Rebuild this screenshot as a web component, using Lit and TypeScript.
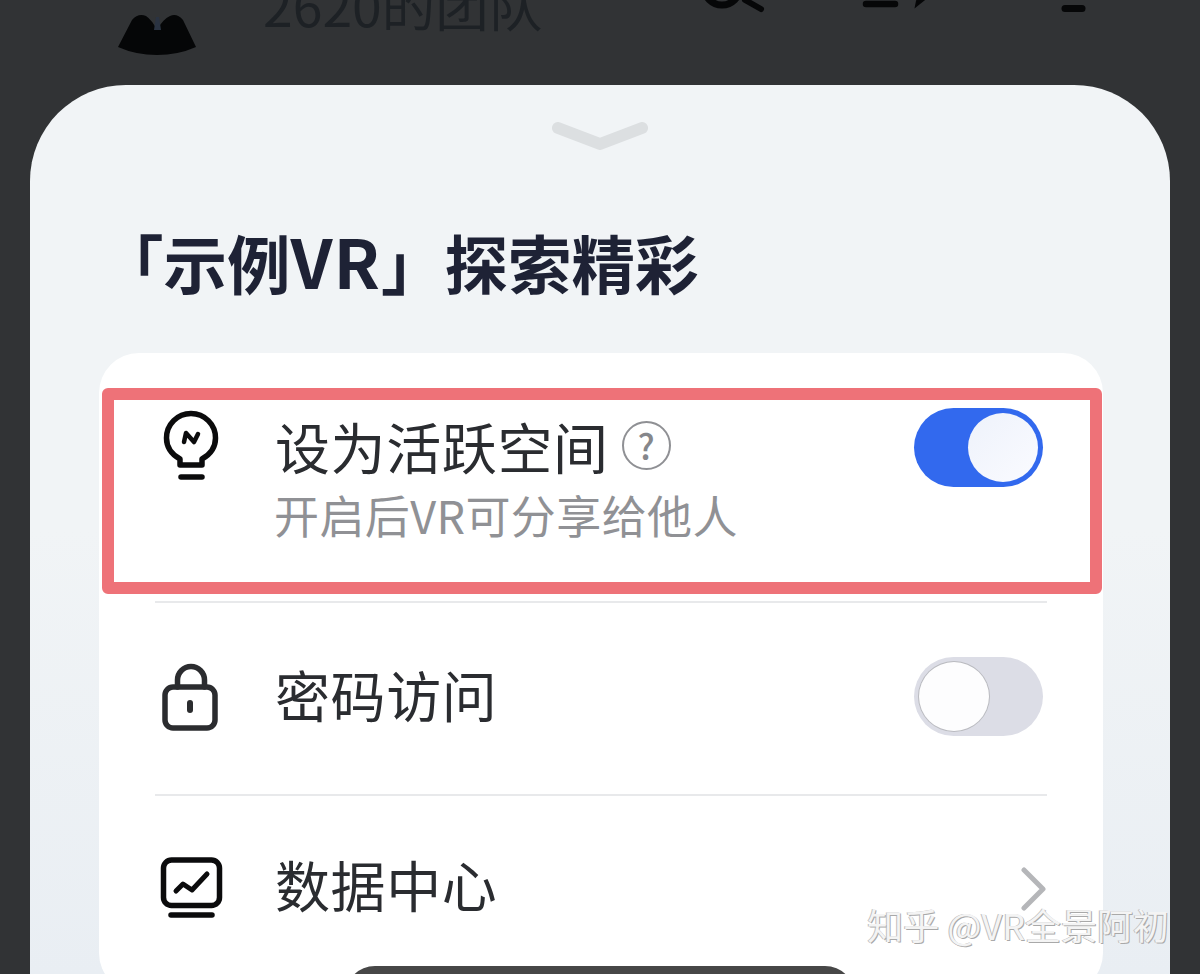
import { LitElement, html, css } from "lit";
import { customElement } from "lit/decorators.js";

const bulb = html`<svg class="ic" viewBox="0 0 70 80" width="70" height="80" fill="none" stroke="#0b0b0c" stroke-width="5.5" stroke-linecap="round" stroke-linejoin="round">
  <path d="M25 56 V50 C16 45 11.5 38 11.5 29 A24.5 24.5 0 0 1 60.5 29 C60.5 38 56 45 47 50 V56 Z"/>
  <path d="M26 68 H47"/>
  <path d="M29 33 L31 24 L39 33 L43 25" stroke-width="4.5"/>
</svg>`;
const lock = html`<svg class="ic" viewBox="0 0 70 80" width="70" height="80" fill="none" stroke="#2b2c2f" stroke-width="5.5" stroke-linecap="round" stroke-linejoin="round">
  <rect x="10" y="26" width="50" height="41" rx="8"/>
  <path d="M22.5 26 V19 A13.5 13.5 0 0 1 49.5 19 V26"/>
  <path d="M35 42 V49" stroke-width="6"/>
</svg>`;
const chart = html`<svg class="ic" viewBox="0 0 70 80" width="70" height="80" fill="none" stroke="#0b0b0c" stroke-width="5.5" stroke-linecap="round" stroke-linejoin="round">
  <rect x="8.500" y="8" width="56" height="45.500" rx="8"/>
  <path d="M16 63 H57"/>
  <path d="M21 39 L28 32 L37 38 L52 22" stroke-width="5"/>
</svg>`;

@customElement("app-root")
export class AppRoot extends LitElement {
  static styles = css`
    :host {
      display: block;
      position: relative;
      width: 1200px;
      height: 974px;
      overflow: hidden;
      background: #313335;
      font-family: "Noto Sans CJK SC", "Noto Sans", sans-serif;
    }
    .top {
      height: 85px;
      overflow: hidden;
      display: flex;
      align-items: flex-start;
      position: relative;
    }
    .avatar { margin: 14px 0 0 118px; flex: none; }
    .team {
      margin: -12px 0 0 67px;
      font-size: 53.5px;
      line-height: 32px;
      height: 40px;
      color: #1d2125;
      white-space: nowrap;
    }
    .tools { margin-left: auto; margin-right: 114px; display: flex; align-items: flex-start; }
    .sheet {
      height: 889px;
      margin: 0 30px;
      border-radius: 96px 96px 0 0;
      background: linear-gradient(180deg, #f1f4f6 0%, #f1f4f6 50%, #e9eef3 100%);
      display: flex;
      flex-direction: column;
      align-items: stretch;
    }
    .handle { display: block; margin: 37px auto 0; flex: none; }
    .title {
      flex: none;
      margin: 69px 0 0 70px;
      height: 84px;
      font-size: 63.5px;
      line-height: 82px;
      font-weight: 700;
      color: #1e2235;
      white-space: nowrap;
    }
    .title span { font-size: 68px; letter-spacing: 1px; }
    .card {
      margin: 50px 67px 0 69px;
      height: 640px;
      flex: none;
      background: #fff;
      border-radius: 40px;
      padding: 0 56px;
    }
    .row {
      display: flex;
      align-items: flex-start;
      border-bottom: 2px solid #e8e9eb;
    }
    .row.first { height: 248px; }
    .row.second { height: 191px; }
    .row.third { border-bottom: 0; }
    .ic { flex: none; display: block; }
    .icon-slot { width: 120px; flex: none; }
    .first .icon-slot { padding-top: 56px; }
    .second .icon-slot { padding-top: 58px; }
    .third .icon-slot { padding-top: 56px; }
    .body { flex: 1; min-width: 0; }
    .first .body { padding-top: 57px; }
    .second .body { padding-top: 55px; }
    .third .body { padding-top: 52px; }
    .label {
      font-size: 55px;
      line-height: 70px;
      letter-spacing: 0.6px;
      color: #2a2c30;
      display: flex;
      align-items: center;
      white-space: nowrap;
    }
    .help {
      width: 49px;
      height: 49px;
      box-sizing: border-box;
      margin-left: 13px;
      border: 2px solid #8f9094;
      border-radius: 50%;
      color: #86878b;
      font-size: 35px;
      font-weight: 500;
      line-height: 44px;
      letter-spacing: 0;
      text-align: center;
    }
    .sub {
      margin-top: 2px;
      margin-left: -1px;
      font-size: 45px;
      line-height: 66px;
      letter-spacing: 0.4px;
      color: #909195;
      white-space: nowrap;
    }
    .toggle {
      flex: none;
      box-sizing: border-box;
      width: 129px;
      height: 79px;
      border-radius: 40px;
      padding: 5px;
      display: flex;
      margin-right: 4px;
    }
    .first .toggle { margin-top: 55px; }
    .second .toggle { margin-top: 54px; }
    .toggle.on { background: #3269ee; justify-content: flex-end; }
    .toggle.off { background: #dcdde6; justify-content: flex-start; }
    .knob {
      width: 70px;
      height: 69px;
      border-radius: 50%;
      background: linear-gradient(135deg, #eef2fb, #fafbff);
    }
    .off .knob { background: #fdfdfe; box-shadow: 0 0 0 1px #b9babf; }
    .chev { flex: none; margin: 71px 0 0 0; display: block; }
    .mark {
      position: absolute;
      left: 102px;
      top: 388px;
      width: 1000px;
      height: 206px;
      box-sizing: border-box;
      border: 12px solid #ee7278;
      border-radius: 6px;
      pointer-events: none;
    }
    .pill {
      position: absolute;
      left: 345px;
      top: 966px;
      width: 510px;
      height: 60px;
      border-radius: 40px;
      background: #474747;
    }
    .wm {
      position: absolute;
      right: 31px;
      top: 898px;
      font-size: 36px;
      line-height: 52px;
      color: #f4f4f4;
      text-shadow: 1px 1px 0 #a9a9a9, -1px 0 0 #bdbdbd;
      white-space: nowrap;
    }
  `;

  render() {
    return html`
      <div class="top">
        <svg class="avatar" width="78" height="41" viewBox="0 0 78 41">
          <path d="M0 33 L14 6 Q20 -1 28 2 Q34 6 39 16 Q45 5 52 2 Q59 -1 65 6 L78 33 Q60 41 39 41 Q18 41 0 33 Z" fill="#050607"/>
          <path d="M36 16 L38 3 H41 L43 16 Z" fill="#2a3342"/>
        </svg>
        <div class="team">2620的团队</div>
        <div class="tools">
          <svg width="386" height="20" viewBox="0 0 386 20" fill="none" stroke="#060708" stroke-linecap="round">
            <circle cx="22" cy="-13" r="18" stroke-width="7"/>
            <path d="M45 0 L61 9" stroke-width="6"/>
            <path d="M166 4 H195" stroke-width="6.500"/>
            <path d="M216 6 L217 1 L226 -2 Z" fill="#060708" stroke-width="2"/>
            <path d="M365 8.500 H382" stroke-width="7"/>
          </svg>
        </div>
      </div>
      <div class="sheet">
        <svg class="handle" width="96" height="28" viewBox="0 0 96 28" fill="none">
          <path d="M6 6 L48 22 L90 6" stroke="#dcdfe1" stroke-width="12" stroke-linecap="round" stroke-linejoin="round"/>
        </svg>
        <div class="title">「示例<span>VR</span>」探索精彩</div>
        <div class="card">
          <div class="row first">
            <div class="icon-slot">${bulb}</div>
            <div class="body">
              <div class="label">设为活跃空间<span class="help">?</span></div>
              <div class="sub">开启后VR可分享给他人</div>
            </div>
            <div class="toggle on"><div class="knob"></div></div>
          </div>
          <div class="row second">
            <div class="icon-slot">${lock}</div>
            <div class="body"><div class="label">密码访问</div></div>
            <div class="toggle off"><div class="knob"></div></div>
          </div>
          <div class="row third">
            <div class="icon-slot">${chart}</div>
            <div class="body"><div class="label">数据中心</div></div>
            <svg class="chev" width="26" height="44" viewBox="0 0 26 44" fill="none">
              <path d="M3 3 L22 22 L3 41" stroke="#b5b6b9" stroke-width="5" stroke-linecap="round" stroke-linejoin="round"/>
            </svg>
          </div>
        </div>
      </div>
      <div class="mark"></div>
      <div class="pill"></div>
      <div class="wm">知乎 @VR全景阿初</div>
    `;
  }
}
